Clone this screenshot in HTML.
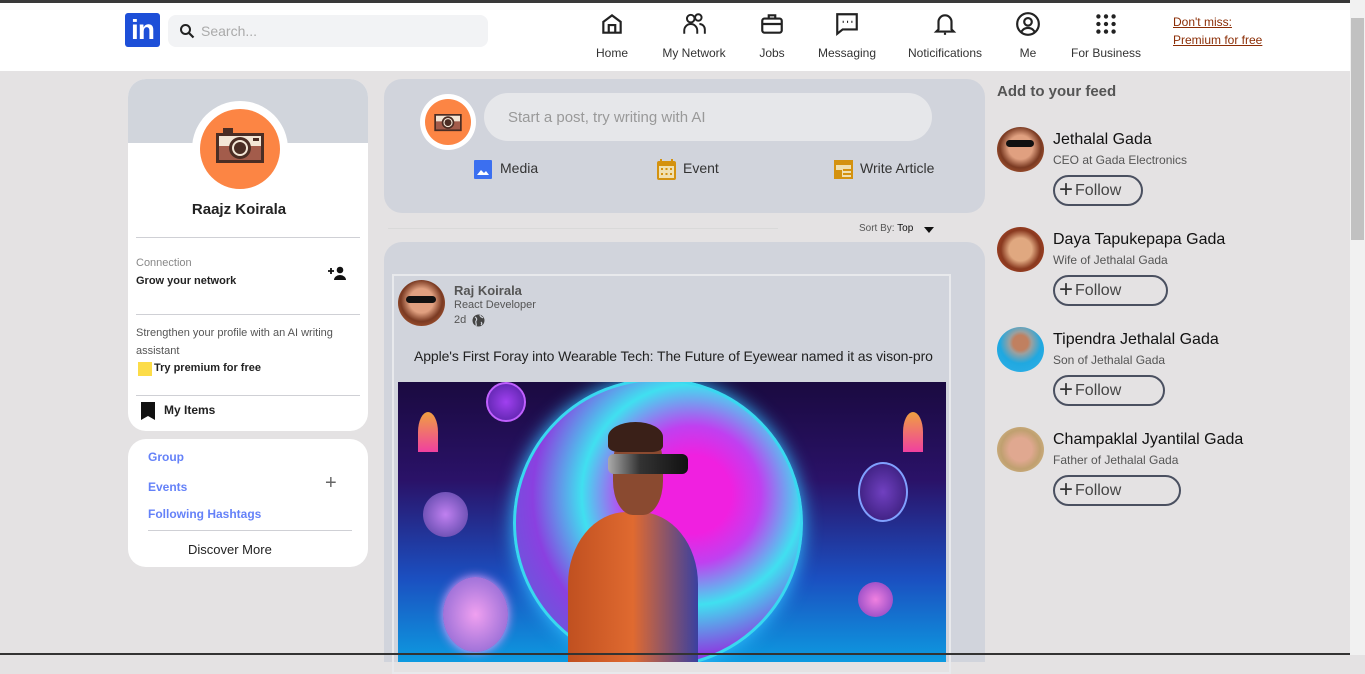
<!DOCTYPE html>
<html><head><meta charset="utf-8"><style>
*{margin:0;padding:0;box-sizing:border-box}
body{width:1365px;height:655px;overflow:hidden;background:#e4e2e3;font-family:"Liberation Sans",sans-serif;position:relative;color:#111}
.a{position:absolute}
.nav{left:0;top:0;width:1350px;height:71px;background:#fff;border-top:3px solid #3a3a3a}
.ni{position:absolute;top:8px;text-align:center;font-size:12px;color:#333;width:90px}
.ni svg{display:block;margin:0 auto 9px;width:26px;height:26px}
.card{background:#fff;border-radius:18px}
.hr{position:absolute;height:1px;background:#cfd0d5}
.fol{position:absolute;left:1053px;height:31px;border:2px solid #4a5060;border-radius:16px;font-size:16px;color:#444;padding-left:4px;line-height:26px}
.fol b{font-weight:400;font-size:24px;vertical-align:-2px;margin-right:2px;color:#333}
.pn{position:absolute;left:1053px;font-size:16px;color:#111}
.ps{position:absolute;left:1053px;font-size:12px;color:#555}
.av{position:absolute;left:997px;width:47px;height:45px;border-radius:50%}
</style></head><body>
<div class="a nav">
  <div class="a" style="left:125px;top:10px;width:35px;height:34px;background:#1d4fd8;border-radius:3px;color:#fff;font-weight:bold;font-size:28px;line-height:34px;text-align:center;letter-spacing:-1px">in</div>
  <div class="a" style="left:168px;top:12px;width:320px;height:32px;background:#f2f3f5;border-radius:8px">
    <svg class="a" style="left:11px;top:8px" width="16" height="16" viewBox="0 0 16 16"><circle cx="6.5" cy="6.5" r="4.5" fill="none" stroke="#222" stroke-width="2"/><path d="M10 10l4.5 4.5" stroke="#222" stroke-width="2.2"/></svg>
    <span class="a" style="left:33px;top:8px;font-size:14px;color:#aaa">Search...</span>
  </div>
  <div class="ni" style="left:567px"><svg viewBox="0 0 24 24" fill="none" stroke="#222" stroke-width="2"><path d="M4 10l8-6 8 6v10H4z"/><path d="M9 20v-7h6v7"/></svg>Home</div>
  <div class="ni" style="left:649px"><svg viewBox="0 0 24 24" fill="none" stroke="#222" stroke-width="1.8"><circle cx="9" cy="7" r="3.5"/><circle cx="16" cy="6" r="3"/><path d="M3 21v-3a6 6 0 0 1 12 0v3M17 12a5 5 0 0 1 5 5v4"/></svg>My Network</div>
  <div class="ni" style="left:727px"><svg viewBox="0 0 24 24" fill="none" stroke="#222" stroke-width="2"><rect x="3" y="7" width="18" height="13" rx="2"/><path d="M9 7V4h6v3M3 12h18"/></svg>Jobs</div>
  <div class="ni" style="left:802px"><svg viewBox="0 0 24 24" fill="none" stroke="#222" stroke-width="2"><path d="M3 3h18v14H8l-5 4z"/><path d="M8 10h1M12 10h1M16 10h1"/></svg>Messaging</div>
  <div class="ni" style="left:900px"><svg viewBox="0 0 24 24" fill="none" stroke="#222" stroke-width="2"><path d="M6 17V10a6 6 0 0 1 12 0v7l2 2H4z"/><path d="M11 21h2"/></svg>Noticifications</div>
  <div class="ni" style="left:983px"><svg viewBox="0 0 24 24" fill="none" stroke="#222" stroke-width="2"><circle cx="12" cy="12" r="10"/><circle cx="12" cy="10" r="3.5"/><path d="M6 19a7 7 0 0 1 12 0"/></svg>Me</div>
  <div class="ni" style="left:1061px"><svg viewBox="0 0 24 24" fill="#222"><circle cx="5" cy="5" r="2"/><circle cx="12" cy="5" r="2"/><circle cx="19" cy="5" r="2"/><circle cx="5" cy="12" r="2"/><circle cx="12" cy="12" r="2"/><circle cx="19" cy="12" r="2"/><circle cx="5" cy="19" r="2"/><circle cx="12" cy="19" r="2"/><circle cx="19" cy="19" r="2"/></svg>For Business</div>
  <div class="a" style="left:1173px;top:10px;font-size:12px;color:#8b2d05;text-decoration:underline;line-height:18px">Don't miss:<br>Premium for free</div>
</div>
<div class="a" style="left:1350px;top:0;width:15px;height:655px;background:#f1f1f1"></div>
<div class="a" style="left:1351px;top:18px;width:13px;height:222px;background:#c1c1c1"></div>

<!-- left card -->
<div class="a card" style="left:128px;top:79px;width:240px;height:352px;overflow:hidden">
  <div class="a" style="left:0;top:0;width:240px;height:64px;background:#d1d5dc"></div>
  <div class="a" style="left:64px;top:22px;width:96px;height:96px;border-radius:50%;background:#fff"></div>
  <div class="a" style="left:72px;top:30px;width:80px;height:80px;border-radius:50%;background:#fc8544"></div>
  <svg class="a" style="left:85px;top:47px" width="54" height="42" viewBox="0 0 54 42"><rect x="10" y="2" width="10" height="6" fill="#4b2d24"/><rect x="3" y="7" width="48" height="30" fill="#4b2d24"/><rect x="6" y="10" width="42" height="10" fill="#f3e6d6"/><rect x="6" y="20" width="42" height="14" fill="#a35c4b"/><circle cx="27" cy="22" r="11" fill="#4b2d24"/><circle cx="27" cy="22" r="8" fill="#f3e6d6"/><circle cx="27" cy="22" r="6" fill="#4b2d24"/><rect x="40" y="12" width="6" height="3" fill="#4b2d24"/></svg>
  <div class="a" style="left:0;top:122px;width:222px;text-align:center;font-size:15px;font-weight:bold;color:#222">Raajz Koirala</div>
  <div class="hr" style="left:8px;top:158px;width:224px"></div>
  <div class="a" style="left:8px;top:178px;font-size:11px;color:#888">Connection</div>
  <div class="a" style="left:8px;top:196px;font-size:11px;font-weight:bold;color:#222">Grow your network</div>
  <svg class="a" style="left:200px;top:187px" width="18" height="14" viewBox="0 0 18 14"><path d="M0 5h6M3 2v6" stroke="#111" stroke-width="1.8"/><circle cx="12" cy="4" r="3.3" fill="#111"/><path d="M6 14a6 5 0 0 1 12 0z" fill="#111"/></svg>
  <div class="hr" style="left:8px;top:235px;width:224px"></div>
  <div class="a" style="left:8px;top:245px;font-size:11px;color:#555;line-height:18px;width:230px">Strengthen your profile with an AI writing assistant</div>
  <div class="a" style="left:10px;top:283px;width:14px;height:14px;background:#fcdc48"></div>
  <div class="a" style="left:26px;top:283px;font-size:11px;font-weight:bold;color:#222">Try premium for free</div>
  <div class="hr" style="left:8px;top:316px;width:224px"></div>
  <svg class="a" style="left:13px;top:323px" width="14" height="18" viewBox="0 0 14 18"><path d="M0 0h14v18l-7-4-7 4z" fill="#111"/></svg>
  <div class="a" style="left:36px;top:324px;font-size:12px;font-weight:bold;color:#222">My Items</div>
</div>
<div class="a card" style="left:128px;top:439px;width:240px;height:128px">
  <div class="a" style="left:20px;top:11px;font-size:12px;color:#4a6cf7;font-weight:bold;opacity:.85">Group</div>
  <div class="a" style="left:20px;top:41px;font-size:12px;color:#4a6cf7;font-weight:bold;opacity:.85">Events</div>
  <div class="a" style="left:197px;top:33px;font-size:20px;color:#666">+</div>
  <div class="a" style="left:20px;top:68px;font-size:12px;color:#4a6cf7;font-weight:bold;opacity:.85">Following Hashtags</div>
  <div class="hr" style="left:20px;top:91px;width:204px"></div>
  <div class="a" style="left:60px;top:103px;font-size:13px;color:#222">Discover More</div>
</div>

<!-- center -->
<div class="a" style="left:384px;top:79px;width:601px;height:134px;background:#d1d4dc;border-radius:18px">
  <div class="a" style="left:36px;top:15px;width:56px;height:56px;border-radius:50%;background:#fff"></div>
  <div class="a" style="left:41px;top:20px;width:46px;height:46px;border-radius:50%;background:#fc8544"></div>
  <svg class="a" style="left:47px;top:31px" width="34" height="24" viewBox="0 0 54 42"><rect x="3" y="7" width="48" height="30" fill="#4b2d24"/><rect x="6" y="10" width="42" height="10" fill="#f3e6d6"/><rect x="6" y="20" width="42" height="14" fill="#a35c4b"/><circle cx="27" cy="22" r="11" fill="#4b2d24"/><circle cx="27" cy="22" r="8" fill="#f3e6d6"/><circle cx="27" cy="22" r="6" fill="#4b2d24"/></svg>
  <div class="a" style="left:100px;top:14px;width:448px;height:48px;border-radius:24px;background:#e6e7ea"></div>
  <div class="a" style="left:124px;top:30px;font-size:15px;color:#999">Start a post, try writing with AI</div>
  <svg class="a" style="left:90px;top:81px" width="18" height="19" viewBox="0 0 18 19"><rect width="18" height="19" rx="1" fill="#3b6ff0"/><path d="M3 15l4-5 3 3 2-2 3 4z" fill="#fff"/></svg>
  <div class="a" style="left:116px;top:81px;font-size:14px;color:#333">Media</div>
  <svg class="a" style="left:273px;top:80px" width="19" height="21" viewBox="0 0 19 21"><rect y="2" width="19" height="19" rx="2" fill="#d4920f"/><rect x="3" y="0" width="2" height="4" fill="#d4920f"/><rect x="14" y="0" width="2" height="4" fill="#d4920f"/><rect x="2" y="7" width="15" height="12" fill="#f0e0b0"/><g fill="#d4920f"><rect x="4" y="9" width="2" height="2"/><rect x="8.5" y="9" width="2" height="2"/><rect x="13" y="9" width="2" height="2"/><rect x="4" y="14" width="2" height="2"/><rect x="8.5" y="14" width="2" height="2"/><rect x="13" y="14" width="2" height="2"/></g></svg>
  <div class="a" style="left:299px;top:81px;font-size:14px;color:#333">Event</div>
  <svg class="a" style="left:450px;top:81px" width="19" height="19" viewBox="0 0 19 19"><rect width="19" height="19" fill="#d4920f"/><rect x="2" y="5" width="15" height="12" fill="#f0e0b0"/><rect x="2" y="10" width="6" height="7" fill="#d4920f"/><rect x="9" y="9" width="8" height="2" fill="#d4920f"/><rect x="9" y="13" width="8" height="2" fill="#d4920f"/></svg>
  <div class="a" style="left:476px;top:81px;font-size:14px;color:#333">Write Article</div>
</div>
<div class="a" style="left:388px;top:228px;width:390px;height:1px;background:#d9d9d9"></div>
<div class="a" style="left:859px;top:223px;font-size:10px;color:#555">Sort By: <span style="color:#111">Top</span></div>
<svg class="a" style="left:924px;top:227px" width="10" height="6"><path d="M0 0h10L5 6z" fill="#111"/></svg>

<div class="a" style="left:384px;top:242px;width:601px;height:420px;background:#d1d4dc;border-radius:18px 18px 0 0">
  <div class="a" style="left:8px;top:32px;width:559px;height:400px;border:2px solid #e8e9ec"></div>
  <div class="a" style="left:14px;top:38px;width:47px;height:46px;border-radius:50%;background:radial-gradient(circle at 50% 45%,#e0a080 0 35%,#7a3a22 60%,#c96a3c)"></div>
  <div class="a" style="left:22px;top:54px;width:30px;height:7px;background:#111;border-radius:4px"></div>
  <div class="a" style="left:70px;top:41px;font-size:13px;font-weight:bold;color:#555">Raj Koirala</div>
  <div class="a" style="left:70px;top:57px;font-size:11px;color:#555">React Developer</div>
  <div class="a" style="left:70px;top:72px;font-size:11px;color:#555">2d</div>
  <svg class="a" style="left:88px;top:72px" width="13" height="13" viewBox="0 0 13 13"><circle cx="6.5" cy="6.5" r="6" fill="#444"/><path d="M3 3c2 1 2 3 1 4s1 3 0 5M8 1c0 2 2 2 3 3M9 8c1 1 1 2 0 3" stroke="#d1d4dc" stroke-width="1.2" fill="none"/></svg>
  <div class="a" style="left:30px;top:106px;font-size:14px;color:#222;letter-spacing:-0.1px">Apple's First Foray into Wearable Tech: The Future of Eyewear named it as vison-pro</div>
  <div class="a" style="left:14px;top:140px;width:548px;height:280px;overflow:hidden;background:linear-gradient(180deg,#1a0a40 0%,#2a1268 35%,#1b4fc0 70%,#0d9ae0 100%)">
    <div class="a" style="left:115px;top:-4px;width:290px;height:290px;border-radius:50%;border:3px solid #39d8f0;background:radial-gradient(circle at 62% 40%,#f020e0 0 16%,#c040f0 28%,#40e0f0 45%,#8a40e0 65%,#3a7ad8 100%);box-shadow:0 0 18px #30c0ff"></div>
    <div class="a" style="left:88px;top:0;width:40px;height:40px;border-radius:50%;background:radial-gradient(#a040f0,#5020a0);border:2px solid #c060ff"></div>
    <div class="a" style="left:25px;top:110px;width:45px;height:45px;border-radius:50%;background:radial-gradient(#c080f0,#5040a0)"></div>
    <div class="a" style="left:45px;top:195px;width:65px;height:75px;border-radius:50%;background:radial-gradient(#f0a0f0,#8060d0);box-shadow:0 0 10px #f0a0ff"></div>
    <div class="a" style="left:460px;top:80px;width:50px;height:60px;border-radius:50%;border:2px solid #80a0ff;background:radial-gradient(#7040c0,#301870)"></div>
    <div class="a" style="left:460px;top:200px;width:35px;height:35px;border-radius:50%;background:radial-gradient(#f080e0,#8040c0)"></div>
    <div class="a" style="left:20px;top:30px;width:20px;height:40px;background:linear-gradient(#f0a040,#f040a0);border-radius:50% 50% 0 0"></div>
    <div class="a" style="left:505px;top:30px;width:20px;height:40px;background:linear-gradient(#f0a040,#f040a0);border-radius:50% 50% 0 0"></div>
    <div class="a" style="left:170px;top:130px;width:130px;height:160px;border-radius:45% 45% 0 0;background:linear-gradient(90deg,#c05020,#e06a30 50%,#3a40a0)"></div>
    <div class="a" style="left:215px;top:48px;width:50px;height:85px;border-radius:40%;background:#8a4a30"></div>
    <div class="a" style="left:210px;top:40px;width:55px;height:30px;border-radius:50% 50% 20% 20%;background:#3a2018"></div>
    <div class="a" style="left:210px;top:72px;width:80px;height:20px;border-radius:6px;background:linear-gradient(90deg,#aaa,#333 40%,#111)"></div>
  </div>
</div>
<div class="a" style="left:0;top:653px;width:1350px;height:2px;background:#333"></div>

<!-- right -->
<div class="a" style="left:997px;top:83px;font-size:15px;font-weight:bold;color:#555">Add to your feed</div>
<div class="av" style="top:127px;background:radial-gradient(circle at 50% 45%,#e0a080 0 35%,#7a3a22 60%,#c96a3c)"></div>
<div class="a" style="left:1006px;top:140px;width:28px;height:7px;background:#111;border-radius:4px"></div>
<div class="pn" style="top:131px">Jethalal Gada</div><div class="ps" style="top:153px">CEO at Gada Electronics</div>
<div class="fol" style="top:175px;width:90px"><b>+</b>Follow</div>
<div class="av" style="top:227px;background:radial-gradient(circle at 50% 50%,#e0a880 0 35%,#8a3a20 60%,#b04020)"></div>
<div class="pn" style="top:231px">Daya Tapukepapa Gada</div><div class="ps" style="top:253px">Wife of Jethalal Gada</div>
<div class="fol" style="top:275px;width:115px"><b>+</b>Follow</div>
<div class="av" style="top:327px;background:radial-gradient(circle at 50% 35%,#c08060 0 20%,#9aa0a0 30%,#20a8e0 55%,#30b0e8)"></div>
<div class="pn" style="top:331px">Tipendra Jethalal Gada</div><div class="ps" style="top:353px">Son of Jethalal Gada</div>
<div class="fol" style="top:375px;width:112px"><b>+</b>Follow</div>
<div class="av" style="top:427px;background:radial-gradient(circle at 50% 50%,#e0a890 0 35%,#c0a070 60%,#d8c090)"></div>
<div class="pn" style="top:431px">Champaklal Jyantilal Gada</div><div class="ps" style="top:453px">Father of Jethalal Gada</div>
<div class="fol" style="top:475px;width:128px"><b>+</b>Follow</div>
</body></html>
